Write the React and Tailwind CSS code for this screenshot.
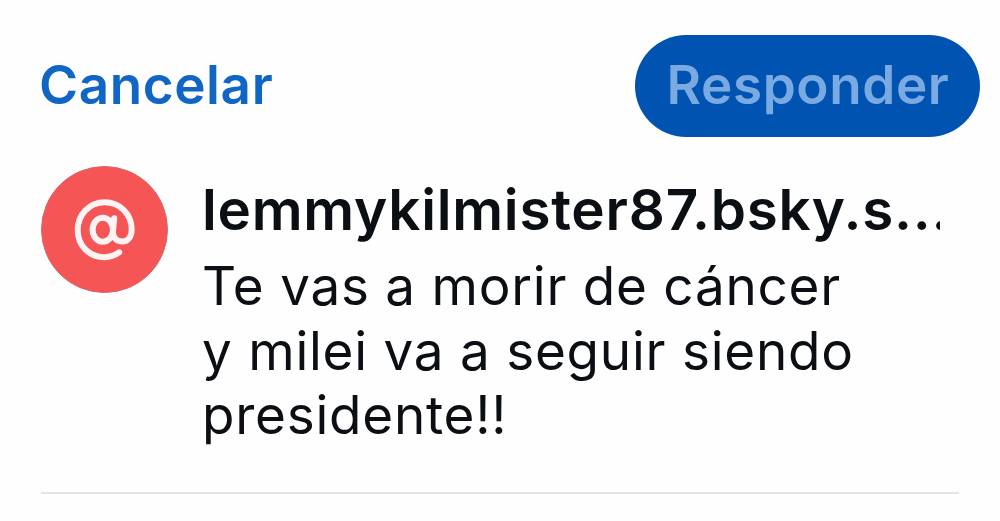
import React from 'react';

const post = {
  handle: 'lemmykilmister87.bsky.s...',
  lines: ['Te vas a morir de cáncer', 'y milei va a seguir siendo', 'presidente!!'],
};

const Avatar = () => (
  <svg className="mt-[29px] h-[127px] w-[127px] shrink-0" viewBox="0 0 127 127" fill="none">
    <circle cx="63.5" cy="63.5" r="63" fill="#f65556" stroke="#d4676b" strokeWidth="1" />
    <g stroke="#fff4f3" strokeWidth="6" strokeLinecap="round" strokeLinejoin="round">
      <ellipse cx="61.8" cy="63.7" rx="10.2" ry="12" />
      <path d="M73.2 52.2 L72 65.5 C71.6 71.5 75.6 75.6 81 75.6 C87.5 75.6 90.7 70 90.7 63.5 C90.7 48 78.8 36.3 63.7 36.3 C48.5 36.3 36.7 48.5 36.7 63.8 C36.7 79.5 48 91.2 63.5 91.2 C69 91.2 74 89.3 78.2 86.3" />
    </g>
  </svg>
);

const App = () => {
  return (
    <div className="h-[521px] w-[1000px] overflow-hidden bg-[#fefefe] font-['Inter',sans-serif]">
      <header className="flex items-start justify-between pl-[39px] pr-5 pt-[35px]">
        <button className="h-[102px] text-[53px] font-semibold leading-[100px] tracking-[0.6px] text-[#0f66c4]">
          <span className="block h-[102px]">Cancelar</span>
        </button>
        <button className="h-[102px] w-[345px] rounded-full bg-[#0053b1] pl-px text-[53px] font-semibold leading-[100px] tracking-[0.6px] text-[#7aaae2]">
          <span className="block h-[102px]">Responder</span>
        </button>
      </header>

      <main className="ml-[41px] mr-[41px] flex h-[357px] border-b-2 border-[#e3e4e6]">
        <Avatar />
        <div className="ml-[34px] mt-10 w-[738px] overflow-hidden whitespace-nowrap text-[#0b0f14]">
          <h1 className="text-[56.5px] font-semibold leading-[65px] tracking-[0.76px]">{post.handle}</h1>
          <div className="mt-3 text-[53px] leading-[64.7px] tracking-[0.76px]">
            {post.lines.map((line) => (
              <p key={line}>{line}</p>
            ))}
          </div>
        </div>
      </main>
    </div>
  );
};

export default App;
